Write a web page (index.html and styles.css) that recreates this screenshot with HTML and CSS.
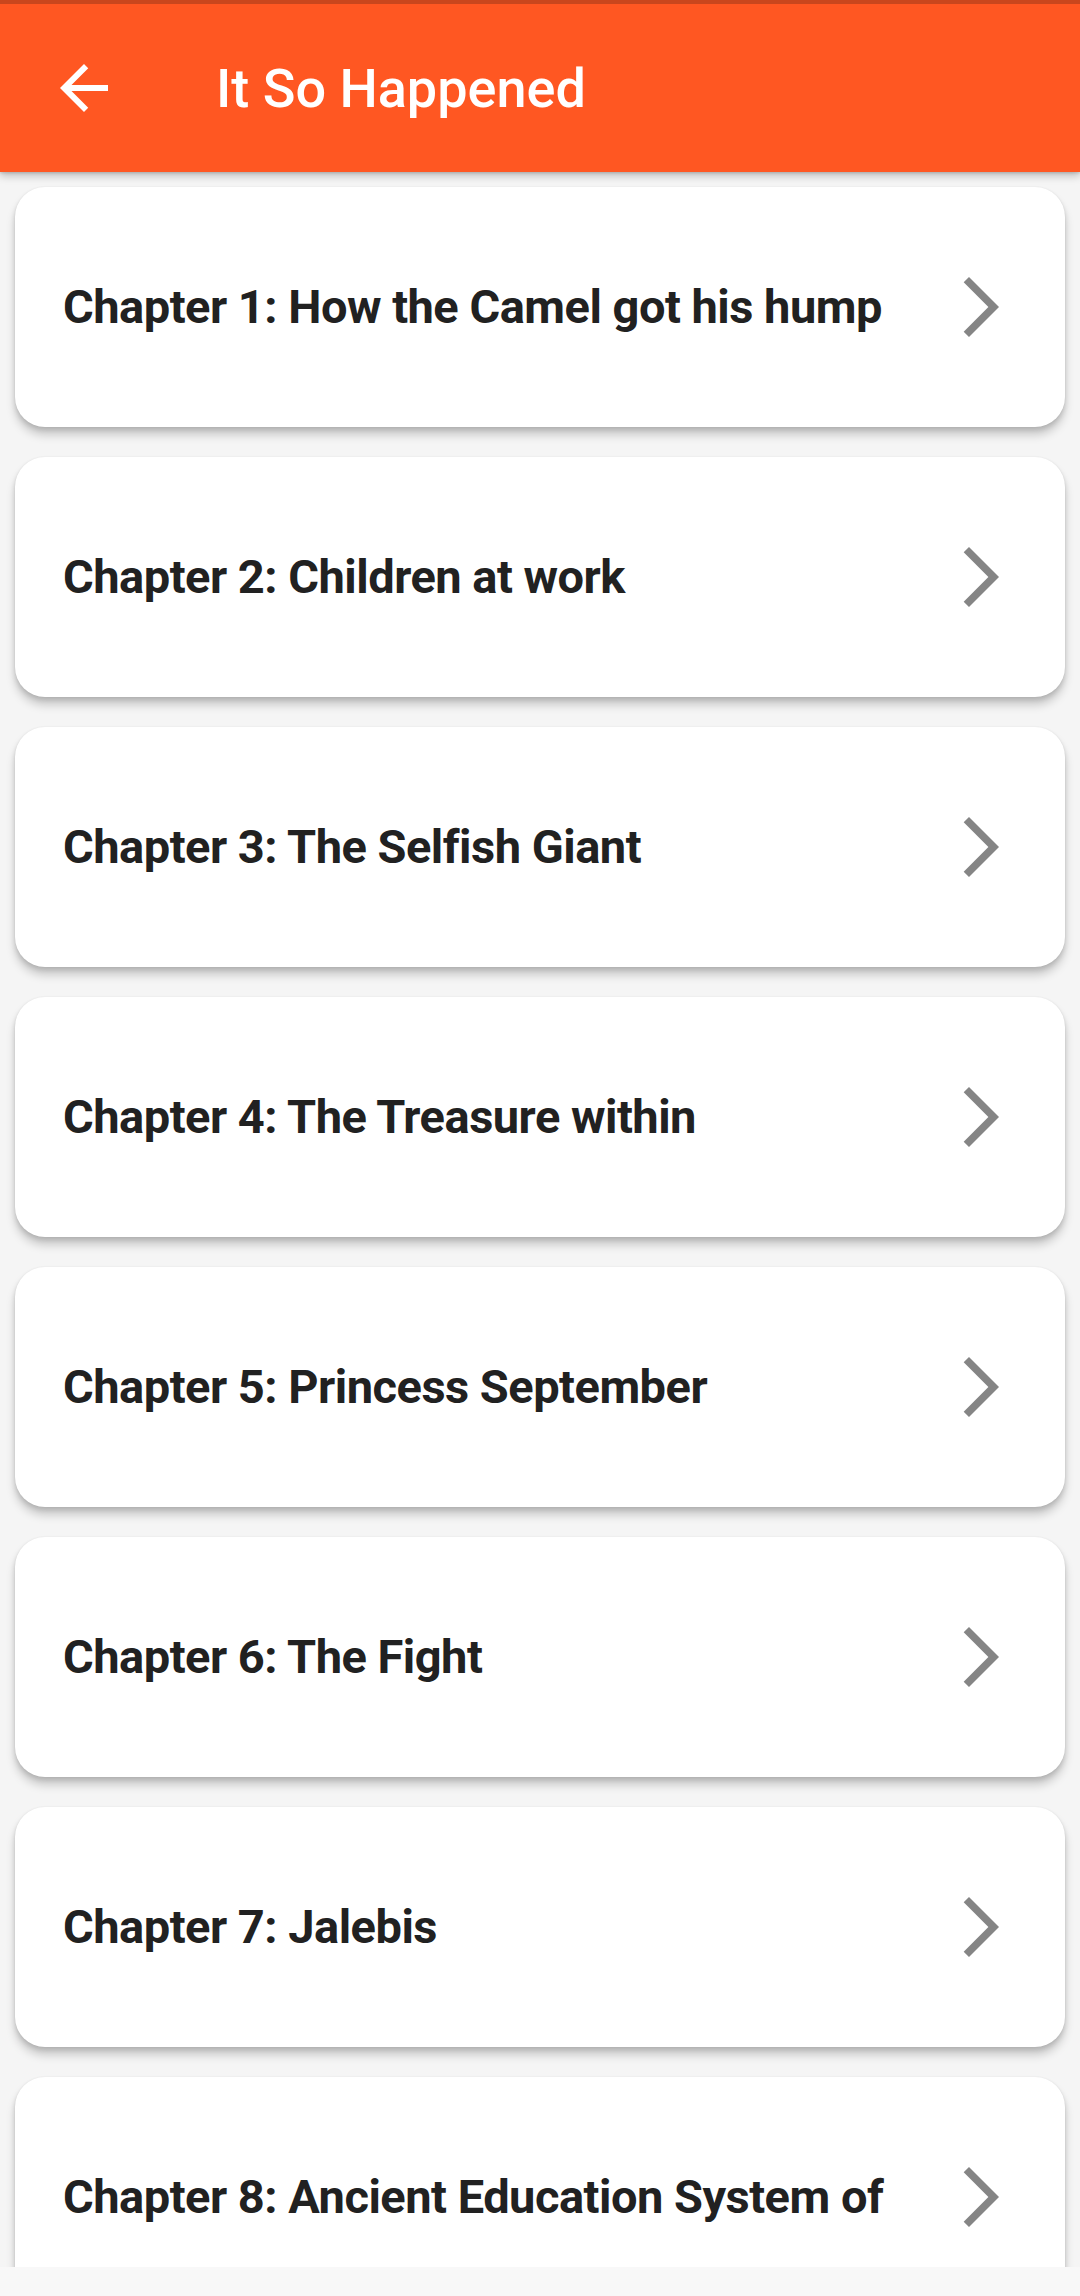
FILE: index.html
```html
<!DOCTYPE html>
<html lang="en">
<head>
<meta charset="utf-8">
<title>It So Happened</title>
<link rel="stylesheet" href="styles.css">
</head>
<body>
<div class="screen">
  <header class="appbar">
    <button class="back" aria-label="Back">
      <svg viewBox="0 0 24 24" width="72" height="72"><path d="M20 11H7.83l5.59-5.59L12 4l-8 8 8 8 1.41-1.41L7.83 13H20v-2z" fill="#fff"/></svg>
    </button>
    <h1 class="title">It So Happened</h1>
  </header>
  <main class="list">
    <div class="card"><span class="label">Chapter 1: How the Camel got his hump</span><svg class="chev" viewBox="0 0 24 24"><path d="M6.23 20.23L8 22l10-10L8 2 6.23 3.77 14.46 12z"/></svg></div>
    <div class="card"><span class="label">Chapter 2: Children at work</span><svg class="chev" viewBox="0 0 24 24"><path d="M6.23 20.23L8 22l10-10L8 2 6.23 3.77 14.46 12z"/></svg></div>
    <div class="card"><span class="label">Chapter 3: The Selfish Giant</span><svg class="chev" viewBox="0 0 24 24"><path d="M6.23 20.23L8 22l10-10L8 2 6.23 3.77 14.46 12z"/></svg></div>
    <div class="card"><span class="label">Chapter 4: The Treasure within</span><svg class="chev" viewBox="0 0 24 24"><path d="M6.23 20.23L8 22l10-10L8 2 6.23 3.77 14.46 12z"/></svg></div>
    <div class="card"><span class="label">Chapter 5: Princess September</span><svg class="chev" viewBox="0 0 24 24"><path d="M6.23 20.23L8 22l10-10L8 2 6.23 3.77 14.46 12z"/></svg></div>
    <div class="card"><span class="label">Chapter 6: The Fight</span><svg class="chev" viewBox="0 0 24 24"><path d="M6.23 20.23L8 22l10-10L8 2 6.23 3.77 14.46 12z"/></svg></div>
    <div class="card"><span class="label">Chapter 7: Jalebis</span><svg class="chev" viewBox="0 0 24 24"><path d="M6.23 20.23L8 22l10-10L8 2 6.23 3.77 14.46 12z"/></svg></div>
    <div class="card"><span class="label">Chapter 8: Ancient Education System of</span><svg class="chev" viewBox="0 0 24 24"><path d="M6.23 20.23L8 22l10-10L8 2 6.23 3.77 14.46 12z"/></svg></div>
  </main>
  <div class="navbar"></div>
</div>
</body>
</html>
```

FILE: styles.css
```css
* { box-sizing: border-box; }
html, body { margin: 0; padding: 0; }
body {
  width: 1080px;
  height: 2296px;
  overflow: hidden;
  background: #f5f5f5;
  font-family: Roboto, "Noto Sans", "Liberation Sans", sans-serif;
}
.screen {
  display: flex;
  flex-direction: column;
  height: 2296px;
}
.appbar {
  position: relative;
  z-index: 2;
  flex: 0 0 172px;
  display: flex;
  align-items: center;
  background: #ff5722;
  border-top: 4px solid #c9461d;
  box-shadow: 0 4px 8px rgba(0,0,0,0.22), 0 1px 3px rgba(0,0,0,0.15);
}
.back {
  width: 216px;
  height: 168px;
  flex: 0 0 auto;
  margin: 0;
  padding: 0 0 0 48px;
  border: 0;
  background: none;
  display: flex;
  align-items: center;
}
.back svg { display: block; }
.title {
  margin: 0;
  color: #fff;
  font-size: 54px;
  font-weight: 500;
}
.list {
  flex: 1 1 auto;
  overflow: hidden;
  padding: 15px 15px 0 15px;
  display: flex;
  flex-direction: column;
  gap: 30px;
  background: #f5f5f5;
}
.card {
  flex: 0 0 auto;
  min-height: 240px;
  background: #fff;
  border-radius: 30px;
  display: flex;
  align-items: flex-start;
  padding: 92px 48px 92px 48px;
  box-shadow: 0 8px 10px rgba(0,0,0,0.18), 0 3px 5px rgba(0,0,0,0.12), 0 0 2px rgba(0,0,0,0.06);
}
.label {
  flex: 1 1 auto;
  min-width: 0;
  color: #212121;
  font-size: 47px;
  line-height: 56px;
  font-weight: 700;
  letter-spacing: -0.5px;
  margin-right: 48px;
}
.chev {
  flex: 0 0 72px;
  display: block;
  width: 72px;
  height: 72px;
  margin: -8px 0 -8px 0;
  fill: #858585;
}
.navbar {
  flex: 0 0 29px;
  background: #f8f8f8;
  position: relative;
  z-index: 2;
}
```
